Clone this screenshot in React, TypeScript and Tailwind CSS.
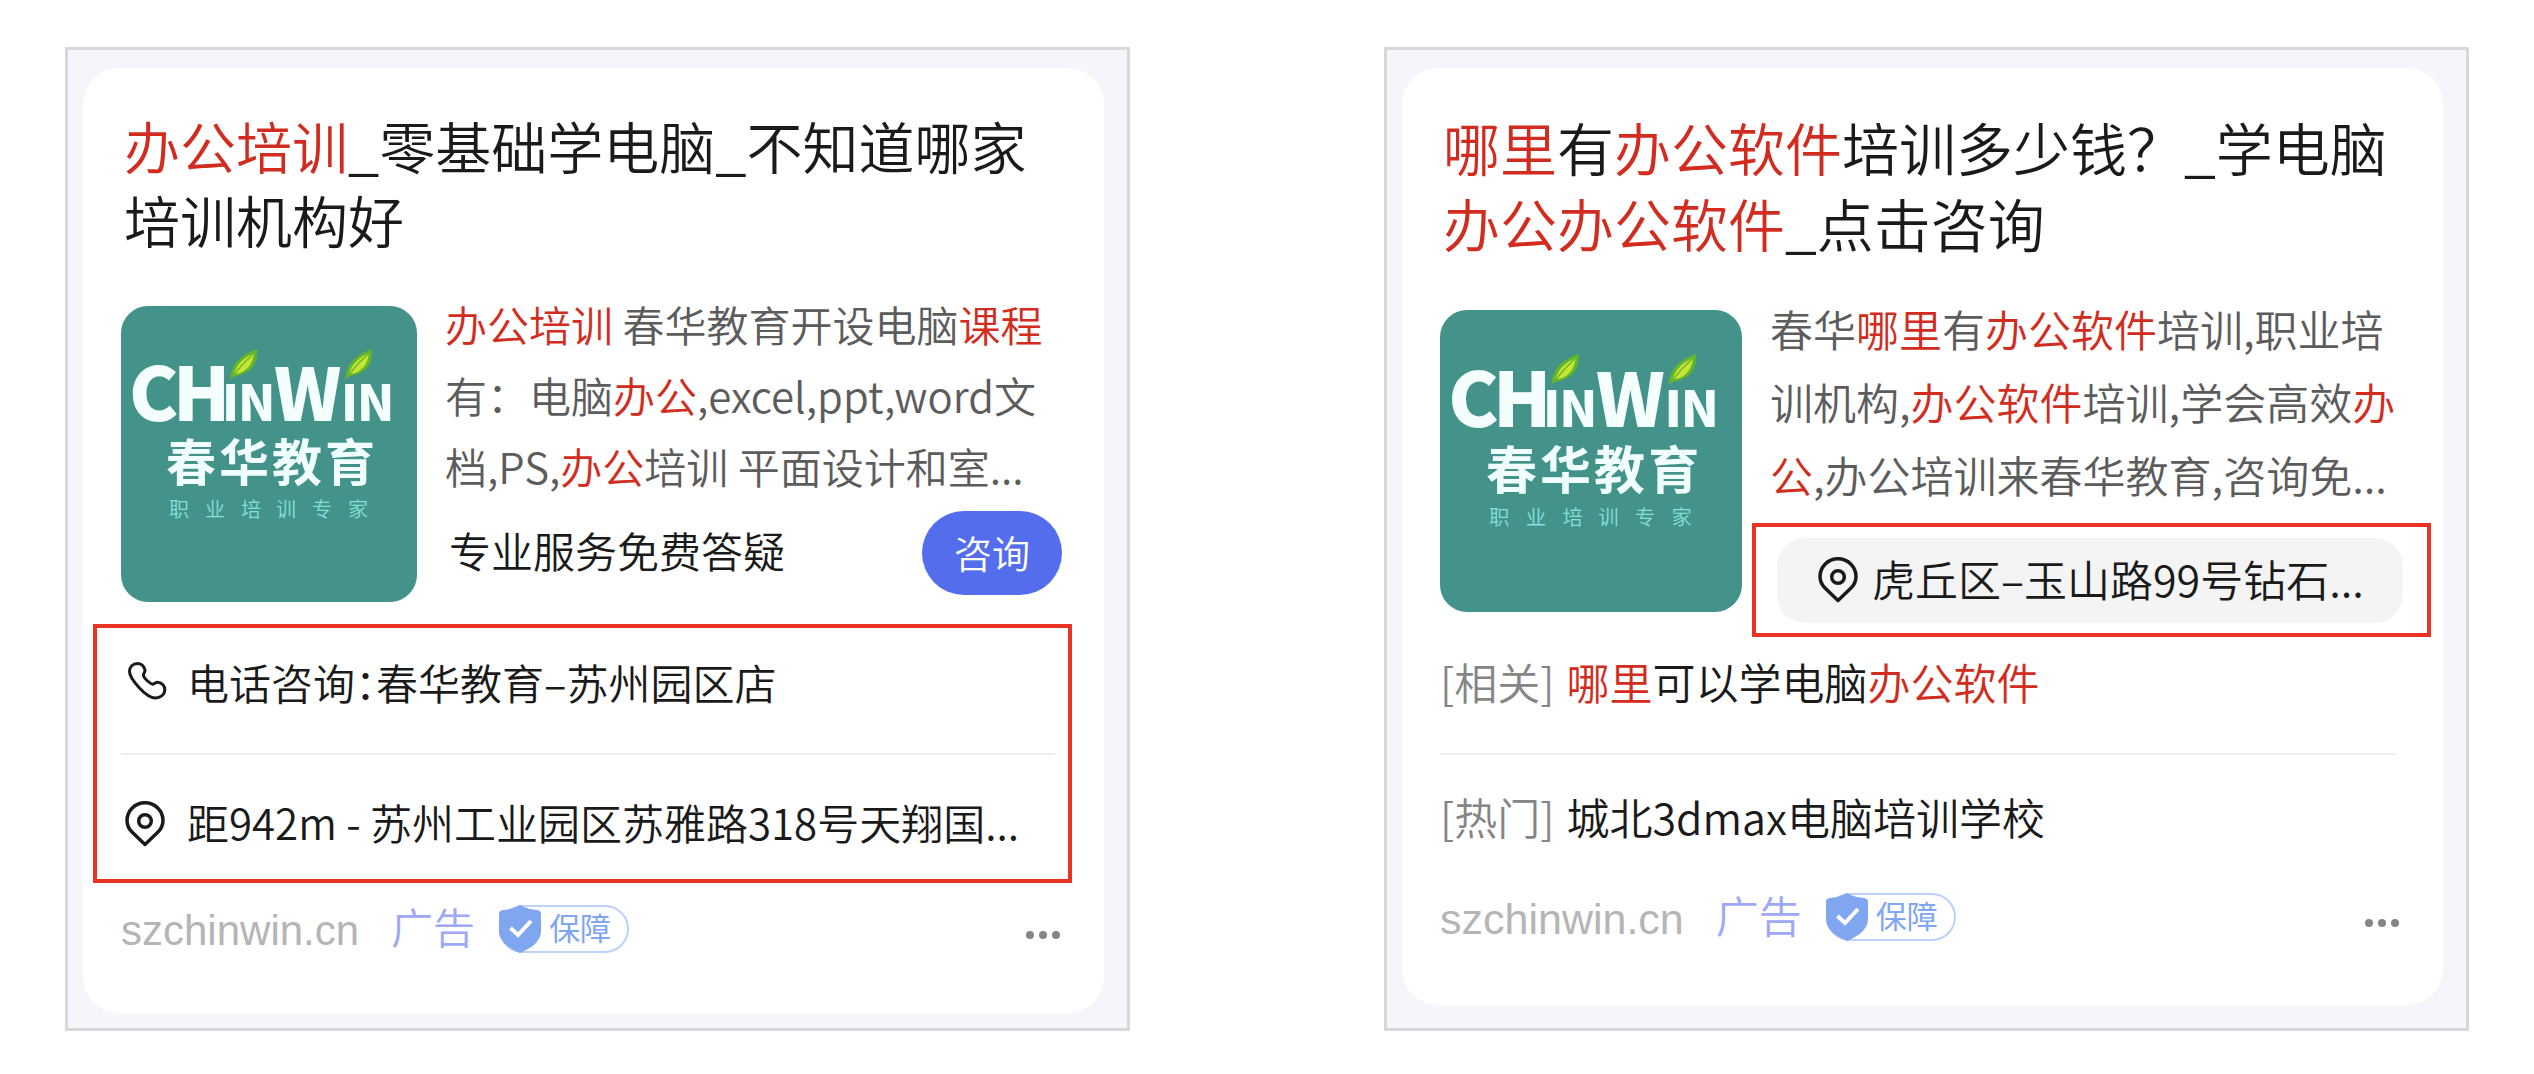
import type { ReactNode } from "react";
import clsx from "clsx";

const Hl = ({ children }: { children: ReactNode }) => (
  <em className="not-italic text-[#d22c20]">{children}</em>
);

const Leaf = ({ x }: { x: number }) => (
  <g transform={`translate(${x} 43)`}>
    <path
      d="M0 30C2 16 8 7 27 0c1 14-5 23-17 26-4 1-6 1-10 4Z"
      fill="#5fb52c"
    />
    <path
      d="M4 25C7 15 13 9 24 4c-1 10-6 17-14 20-2 1-4 0-6 1Z"
      fill="#c6e637"
    />
    <path d="M2 28C8 20 14 13 24 4" stroke="#6fb62d" strokeWidth="1.5" fill="none" />
  </g>
);

const Logo = ({ className }: { className: string }) => (
  <svg
    viewBox="0 0 296 296"
    role="img"
    aria-label="春华教育"
    className={clsx("mt-[18px] shrink-0 rounded-[27px] bg-[#43938b]", className)}
  >
    <g fill="#f4fffd" className="font-black" fontSize="74">
      <text x="8" y="115">C</text>
      <text x="52" y="115">H</text>
      <text x="153" y="115" fontSize="72">W</text>
      <g fontSize="49">
        <text x="101 117" y="115">IN</text>
        <text x="220 236" y="115">IN</text>
      </g>
    </g>
    <Leaf x={109} />
    <Leaf x={224} />
    <text
      x="45 98 151 204"
      y="175"
      fontSize="50"
      fill="#f0fffd"
      className="font-bold"
    >
      春华教育
    </text>
    <text
      x="48 84 120 155 191 227"
      y="211"
      fontSize="20"
      fill="#83e0d9"
    >
      职业培训专家
    </text>
  </svg>
);

const PinIcon = () => (
  <svg
    viewBox="0 0 44 48"
    className="h-12 w-11 shrink-0"
    fill="none"
    stroke="#1a1a1a"
    strokeWidth="3.5"
    strokeLinejoin="round"
  >
    <path d="M22 43.500L9.500 31.500C5.700 28 4 24 4 19.500a18 17.800 0 0 1 36 0c0 4.500-1.700 8.500-5.500 12Z" />
    <circle cx="22" cy="20" r="6.300" />
  </svg>
);

const PhoneIcon = () => (
  <svg
    viewBox="0 0 44 48"
    className="h-12 w-11 shrink-0"
    fill="none"
    stroke="#1a1a1a"
    strokeWidth="3"
    strokeLinejoin="round"
  >
    <path d="M14.300 2.500C18 2.500 21 5.200 22 9c.4 2-1.600 3-1.600 5 .2 3 5.600 8 9.100 9.200 2 0 3-2.200 5.500-2 4 .4 7 3.800 6.800 7.800-.3 5-4.800 8-9.300 8-4.500 0-11.500-5-16.500-10.500S6.500 15 6.500 10.500s3.500-8 7.800-8Z" />
  </svg>
);

const Shield = () => (
  <svg viewBox="0 0 42 48" className="absolute -top-0.5 -left-0.5 h-12 w-[42px]">
    <path
      d="M21 0c5 3 11 4.500 17 5 2.500.3 4 1.500 4 4v17c0 10-9 17-21 22C9 43 0 36 0 26V9c0-2.500 1.500-3.700 4-4 6-.5 12-2 17-5Z"
      fill="#80a6f0"
    />
    <path
      d="M11.500 23l7.500 7 13-14"
      fill="none"
      stroke="#fff"
      strokeWidth="4"
    />
  </svg>
);

const Footer = ({ className }: { className: string }) => (
  <footer className={clsx("flex h-[92px] items-center leading-[46px]", className)}>
    <a
      href="#"
      className="pt-1 font-['Liberation_Sans',sans-serif] text-[#b5b5b5]"
    >
      szchinwin.cn
    </a>
    <span className="ml-8 pb-1.5 text-[#9da9f6]">广告</span>
    <span className="relative ml-6 flex h-12 items-center rounded-full border-2 border-[#bcd1fa] pr-4 pb-1 pl-12 text-[31px] leading-[40px] font-normal text-[#80a6f0]">
      <Shield />
      保障
    </span>
    <button
      type="button"
      aria-label="更多"
      className="mt-3 mr-1 ml-auto flex h-12 items-center gap-[5px]"
    >
      <i className="size-2 rounded-full bg-[#858585]" />
      <i className="size-2 rounded-full bg-[#858585]" />
      <i className="size-2 rounded-full bg-[#858585]" />
    </button>
  </footer>
);

const Card = ({
  className,
  children,
}: {
  className: string;
  children: ReactNode;
}) => (
  <section className="border-3 border-[#d8d8d8] bg-[#f5f6fb] pt-[18px] pr-[23px] pb-[15px] pl-[15px]">
    <article
      className={clsx("rounded-[36px] bg-white pt-10 pr-10 pl-[38px]", className)}
    >
      {children}
    </article>
  </section>
);

const PhoneAd = () => (
  <Card className="pb-[38px]">
    <h2 className="pl-[3px] text-[56px] leading-[74px]">
      <a href="#">
        <Hl>办公培训</Hl>_零基础学电脑_不知道哪家培训机构好
      </a>
    </h2>
    <div className="mt-8 flex items-start gap-7">
      <Logo className="size-[296px]" />
      <div className="min-w-0 flex-1">
        <p className="text-[42px] leading-[71px] text-[#5c5c5c]">
          <Hl>办公培训</Hl> 春华教育开设电脑<Hl>课程</Hl>有：电脑<Hl>办公</Hl>
          ,excel,ppt,word文档,PS,<Hl>办公</Hl>培训 平面设计和室...
        </p>
        <div className="mt-2.5 flex items-start justify-between pr-0.5 pl-1">
          <span className="text-[42px] leading-[78px]">专业服务免费答疑</span>
          <button
            type="button"
            className="h-[84px] w-[140px] rounded-full bg-[#546ded] pb-1 text-[38px] text-white"
          >
            咨询
          </button>
        </div>
      </div>
    </div>
    <ul className="mt-[22px] -mr-2 -ml-7 border-4 border-[#ea3323] pr-[13px] pl-6 text-[42px] leading-[60px]">
      <li className="h-[127px] border-b-2 border-[#efefef] pb-3">
        <a href="#" className="flex h-full items-center gap-5 pl-0.5">
          <PhoneIcon />
          <span className="pb-1.5 [font-feature-settings:'halt']">
            电话咨询：春华教育–苏州园区店
          </span>
        </a>
      </li>
      <li className="h-[124px] pt-4">
        <a href="#" className="flex h-full items-center gap-5 pl-0.5">
          <PinIcon />
          <span className="pb-1.5">
            距942m - 苏州工业园区苏雅路318号天翔国...
          </span>
        </a>
      </li>
    </ul>
    <Footer className="text-[42px]" />
  </Card>
);

const AddressAd = () => (
  <Card className="pb-[42px]">
    <h2 className="pl-[3px] text-[57px] leading-[76px]">
      <a href="#">
        <Hl>哪里</Hl>有<Hl>办公软件</Hl>培训多少钱？_学电脑
        <Hl>办公办公软件</Hl>_点击咨询
      </a>
    </h2>
    <div className="mt-8 flex items-start gap-7">
      <Logo className="size-[302px]" />
      <div className="min-w-0 flex-1">
        <p className="text-[43px] leading-[73px] text-[#5c5c5c]">
          春华<Hl>哪里</Hl>有<Hl>办公软件</Hl>培训,职业培训机构,
          <Hl>办公软件</Hl>培训,学会高效<Hl>办公</Hl>
          ,办公培训来春华教育,咨询免...
        </p>
        <div className="mt-3 -mr-7 -ml-[18px] border-4 border-[#ea3323] pt-[11px] pr-6 pb-2.5 pl-[21px]">
          <a
            href="#"
            className="flex h-[85px] items-center gap-3 rounded-[28px] bg-[#f4f4f4] pl-[39px] text-[43px] leading-[60px]"
          >
            <PinIcon />
            <span className="pb-1.5">虎丘区–玉山路99号钻石...</span>
          </a>
        </div>
      </div>
    </div>
    <ul className="mr-2 text-[43px] leading-[60px]">
      <li className="flex h-[118px] items-center gap-3 border-b-2 border-[#efefef] pb-7">
        <span className="text-[#858585]">[相关]</span>
        <a href="#">
          <Hl>哪里</Hl>可以学电脑<Hl>办公软件</Hl>
        </a>
      </li>
      <li className="flex h-[116px] items-center gap-3 pt-1.5">
        <span className="text-[#858585]">[热门]</span>
        <a href="#">城北3dmax电脑培训学校</a>
      </li>
    </ul>
    <Footer className="text-[43px]" />
  </Card>
);

export default function App() {
  return (
    <main className="grid grid-cols-[1065fr_1085fr] items-stretch gap-[254px] bg-white px-[65px] pt-[47px] pb-11 font-['Noto_Sans_CJK_SC',sans-serif] font-[350] text-[#1a1a1a]">
      <PhoneAd />
      <AddressAd />
    </main>
  );
}
